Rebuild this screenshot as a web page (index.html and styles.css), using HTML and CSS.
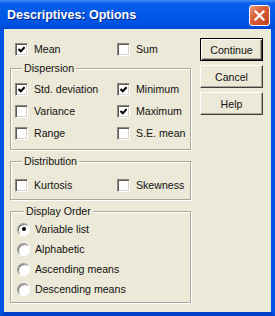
FILE: index.html
```html
<!DOCTYPE html>
<html lang="en">
<head>
    <meta charset="UTF-8">
    <title>Descriptives: Options</title>
    <link rel="stylesheet" href="styles.css">
</head>
<body>
<div class="window">
    <div class="titlebar">
        <span class="title">Descriptives: Options</span>
        <span class="close">
            <svg width="11" height="11" viewBox="0 0 11 11"><path d="M1.5 1.5 L9.5 9.5 M9.5 1.5 L1.5 9.5" stroke="#fff" stroke-width="2.2" stroke-linecap="square"/></svg>
        </span>
    </div>

    <div class="client">
        <div class="options">
            <div class="grid top">
                <label class="row"><span class="check on"></span>Mean</label>
                <label class="row"><span class="check"></span>Sum</label>
            </div>

            <fieldset class="group dispersion">
                <legend>Dispersion</legend>
                <div class="grid">
                    <label class="row"><span class="check on"></span>Std. deviation</label>
                    <label class="row"><span class="check on"></span>Minimum</label>
                    <label class="row"><span class="check"></span>Variance</label>
                    <label class="row"><span class="check on"></span>Maximum</label>
                    <label class="row"><span class="check"></span>Range</label>
                    <label class="row"><span class="check"></span>S.E. mean</label>
                </div>
            </fieldset>

            <fieldset class="group distribution">
                <legend>Distribution</legend>
                <div class="grid">
                    <label class="row"><span class="check"></span>Kurtosis</label>
                    <label class="row"><span class="check"></span>Skewness</label>
                </div>
            </fieldset>

            <fieldset class="group order">
                <legend>Display Order</legend>
                <label class="radio-row"><span class="radio on"></span>Variable list</label>
                <label class="radio-row"><span class="radio"></span>Alphabetic</label>
                <label class="radio-row"><span class="radio"></span>Ascending means</label>
                <label class="radio-row"><span class="radio"></span>Descending means</label>
            </fieldset>
        </div>

        <div class="buttons">
            <button class="btn default">Continue</button>
            <button class="btn">Cancel</button>
            <button class="btn">Help</button>
        </div>
    </div>
</div>
</body>
</html>
```

FILE: styles.css
```css
:root {
    --face: #ece9d8;
    --frame: #0054e3;
    --text: #111;
}

* {
    margin: 0;
    padding: 0;
    box-sizing: border-box;
}

body {
    font-family: "Liberation Sans", Arial, sans-serif;
    font-size: 10.6px;
    color: var(--text);
    background: var(--face);
}

.window {
    width: 275px;
    height: 316px;
    display: flex;
    flex-direction: column;
    background: var(--face);
    border: 4px solid var(--frame);
    border-top: 0;
    border-bottom-color: #0040c8;
}

.titlebar {
    height: 29px;
    margin: 0 -4px;
    display: flex;
    align-items: center;
    justify-content: space-between;
    padding: 0 5px 0 7px;
    background: linear-gradient(180deg, #3d8cf5 0%, #0a5fec 12%, #0058e8 50%, #0052e0 85%, #0048d6 100%);
}

.title {
    color: #fff;
    font-weight: bold;
    font-size: 12.5px;
    text-shadow: 1px 1px 0 #0a2a8a;
    margin-top: 1px;
}

.close {
    width: 21px;
    height: 21px;
    margin-top: 2px;
    display: flex;
    align-items: center;
    justify-content: center;
    border: 1px solid #fff;
    border-radius: 3px;
    background: linear-gradient(135deg, #e89a7e 0%, #d9603b 40%, #c4431c 100%);
}

.client {
    flex: 1;
    display: flex;
    padding: 9px 0 0 6px;
}

.options {
    width: 181px;
    display: flex;
    flex-direction: column;
}

.grid {
    display: grid;
    grid-template-columns: 102px 1fr;
}

.top {
    padding-left: 5px;
}

.row {
    height: 22px;
    display: flex;
    align-items: center;
    gap: 6px;
}

.check {
    width: 13px;
    height: 13px;
    flex: none;
    background: #fff;
    border: 1px solid;
    border-color: #8c8a80 #fff #fff #8c8a80;
    box-shadow: inset 1px 1px 0 #5a5a5a, inset -1px -1px 0 #d8d5c8;
    display: flex;
    align-items: center;
    justify-content: center;
}

.check.on::after {
    content: "";
    width: 7px;
    height: 7px;
    background: url("data:image/svg+xml,%3Csvg xmlns='http://www.w3.org/2000/svg' width='7' height='7'%3E%3Cpath d='M0.5 3 L2.8 5.3 L6.6 1.2' fill='none' stroke='%23000' stroke-width='2'/%3E%3C/svg%3E") no-repeat;
}

.group {
    border: 1px solid #aca899;
    box-shadow: inset 1px 1px 0 #fff, 1px 1px 0 #fff;
    padding: 3px 0 5px 4px;
}

.group legend {
    line-height: 13px;
    margin-left: 7px;
    padding: 0 2px;
    background: var(--face);
}

.dispersion {
    margin-top: 2px;
}

.distribution {
    margin-top: 5px;
    padding-top: 6px;
    padding-bottom: 3px;
}

.order {
    margin-top: 5px;
    padding: 1px 0 3px 6px;
}

.radio-row {
    height: 20px;
    display: flex;
    align-items: center;
    gap: 5px;
}

.radio {
    width: 13px;
    height: 13px;
    flex: none;
    border-radius: 50%;
    background: #fff;
    border: 1px solid;
    border-color: #a09e94 #fff #fff #a09e94;
    box-shadow: inset 1px 1px 0 #7a7a7a;
    display: flex;
    align-items: center;
    justify-content: center;
}

.radio.on::after {
    content: "";
    width: 4px;
    height: 4px;
    border-radius: 50%;
    background: #000;
}

.buttons {
    margin-left: 9px;
    width: 63px;
    display: flex;
    flex-direction: column;
    gap: 4px;
}

.btn {
    height: 23px;
    font: inherit;
    color: var(--text);
    background: var(--face);
    border: 1px solid;
    border-color: #fff #404040 #404040 #fff;
    box-shadow: inset -1px -1px 0 #aca899;
}

.btn.default {
    border: 1px solid #000;
    box-shadow: inset 1px 1px 0 #fff, inset -1px -1px 0 #404040, inset -2px -2px 0 #aca899;
}
```
